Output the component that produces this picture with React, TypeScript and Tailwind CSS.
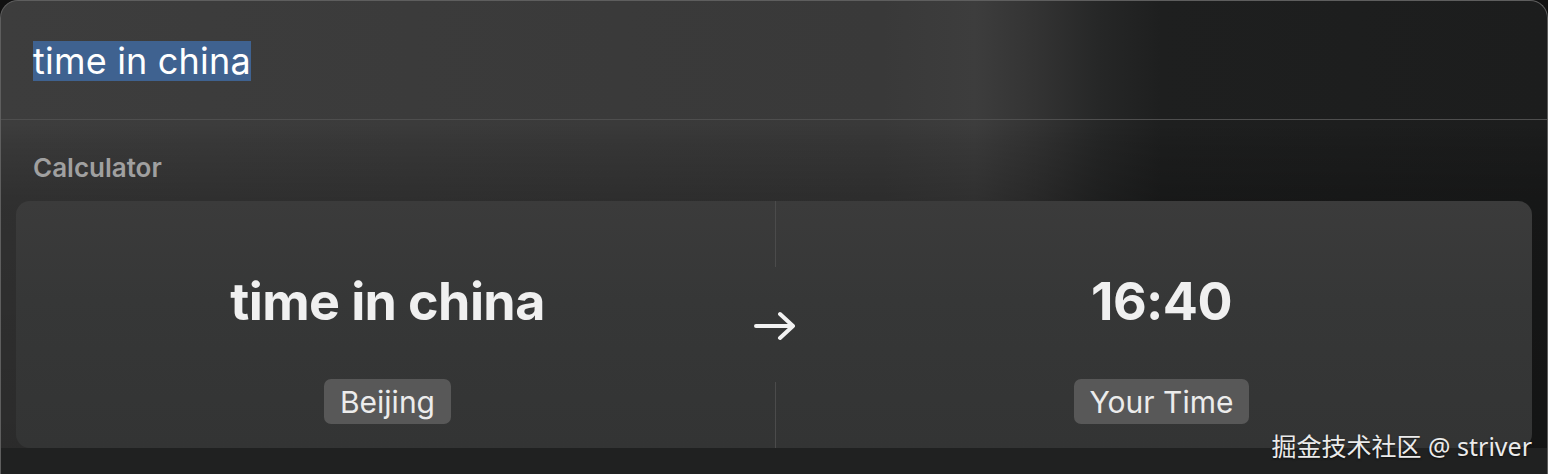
const font = { fontFamily: "Inter, 'Noto Sans', sans-serif" };

const Pill = ({ label }: { label: string }) => (
  <span className="rounded-[7px] bg-[#585858] px-[16px] h-[45px] flex items-center text-[30px] text-[#ececec] leading-none">
    {label}
  </span>
);

const Side = ({ title, tag, className }: { title: string; tag: string; className: string }) => (
  <div className={`flex flex-col items-center pt-[74px] ${className}`}>
    <div className="text-[52px] font-bold text-[#f0f0f0] leading-[53px] tracking-[-0.6px]">{title}</div>
    <div className="mt-[51px]">
      <Pill label={tag} />
    </div>
  </div>
);

const Arrow = () => (
  <svg width="46" height="32" viewBox="0 0 46 32" fill="none" className="shrink-0">
    <path d="M4 16h37M28 4l13 12-13 12" stroke="#f2f2f2" strokeWidth="4" strokeLinecap="round" strokeLinejoin="round" />
  </svg>
);

export default function App() {
  return (
    <div className="w-[1548px] h-[474px] bg-[#111111] overflow-hidden" style={font}>
      <div className="relative h-full rounded-t-[18px] border-t border-l border-r border-[#5e5e5e] bg-[linear-gradient(90deg,#3d3d3d_0%,#3a3a3a_40%,#393939_57%,#3d3d3d_63%,#333333_67%,#262727_71%,#1e1f1f_75%,#1c1d1d_100%)] overflow-hidden">
        <div className="absolute inset-0 bg-[linear-gradient(180deg,rgba(0,0,0,0)_0%,rgba(0,0,0,0)_26%,rgba(0,0,0,0.08)_30%,rgba(0,0,0,0.22)_42%,rgba(0,0,0,0.3)_100%)]" />
        <div className="relative">
          <div className="h-[118px] px-[32px] pt-[40px]">
            <span className="bg-[#3f6290] text-white text-[36px] leading-[40px] tracking-[0.2px] inline-block">time in china</span>
          </div>
          <div className="h-px bg-[#4e4e4e]" />
          <div className="px-[32px] pt-[35px] h-[81px] text-[26px] font-semibold text-[#a0a0a0] leading-none">Calculator</div>
          <div className="mx-[15px] h-[247px] rounded-[14px] bg-[linear-gradient(180deg,#3b3b3b_0%,#363737_40%,#333434_100%)] flex">
            <Side title="time in china" tag="Beijing" className="w-[743px]" />
            <div className="w-[32px] flex flex-col items-center">
              <div className="w-px h-[66px] bg-[#4b4b4b]" />
              <div className="flex-1 flex items-center justify-center pt-[2px]">
                <Arrow />
              </div>
              <div className="w-px h-[66px] bg-[#4b4b4b]" />
            </div>
            <Side title="16:40" tag="Your Time" className="flex-1" />
          </div>
          <div className="h-[27px] bg-[#202121]" />
        </div>
        <div
          className="absolute right-[15px] bottom-[15px] text-[25px] text-[#ebebeb] leading-none [text-shadow:0_1px_2px_rgba(0,0,0,0.6)]"
          style={{ fontFamily: "'Noto Sans', 'Noto Sans CJK SC', sans-serif" }}
        >
          掘金技术社区 @ striver
        </div>
      </div>
    </div>
  );
}
